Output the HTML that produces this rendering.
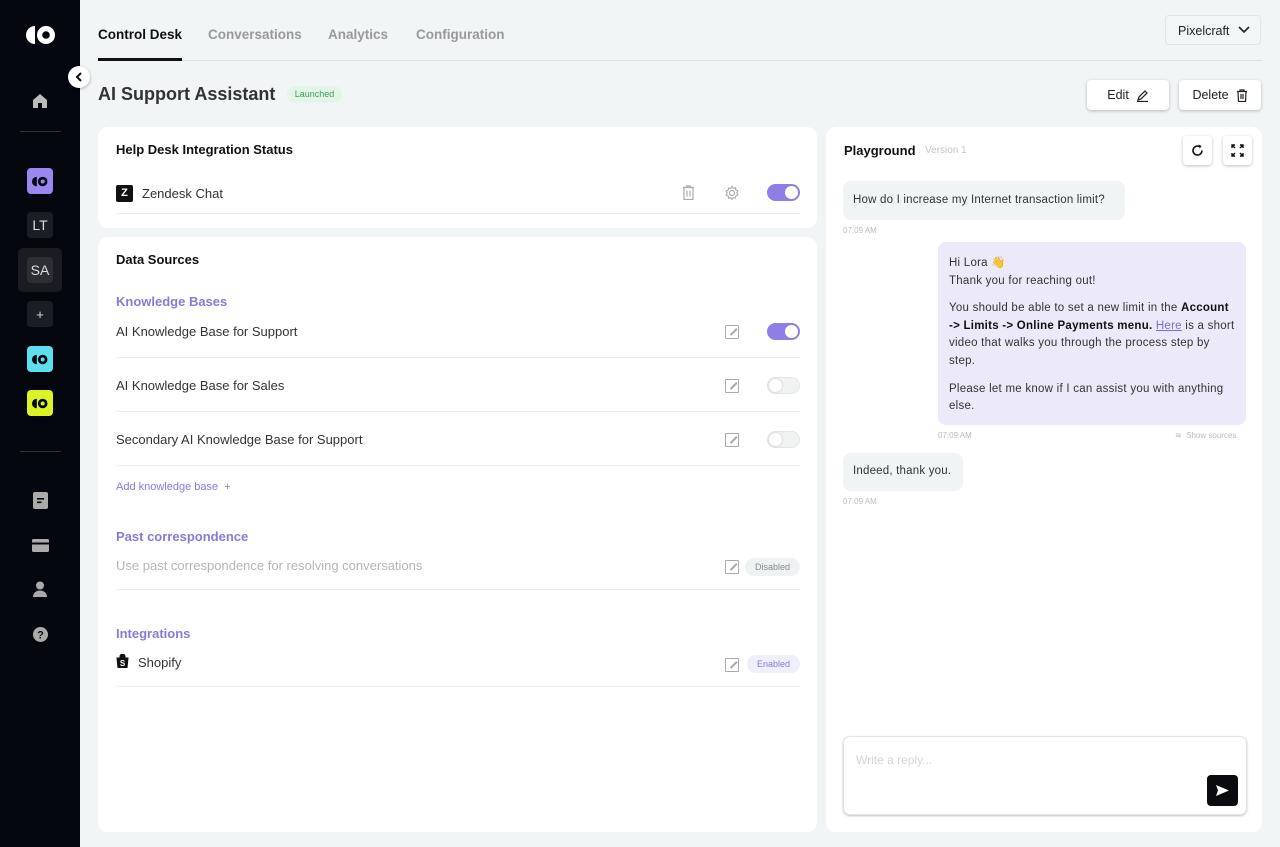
<!DOCTYPE html>
<html><head><meta charset="utf-8">
<style>
*{box-sizing:border-box;margin:0;padding:0}
body{width:1280px;height:847px;overflow:hidden;background:#f1f5f5;font-family:"Liberation Sans",sans-serif;color:#222;position:relative}
.a{position:absolute}
.side{left:0;top:0;width:80px;height:847px;background:#05070f}
.sq{position:absolute;left:27px;width:26px;height:26px;border-radius:4px;display:flex;align-items:center;justify-content:center;font-size:14px;color:#ddd}
.card{background:#fff;border-radius:10px;position:absolute}
.t{position:absolute;white-space:nowrap}
.line{position:absolute;height:1px;background:#ececec}
.tog{position:absolute;width:33px;height:17px;border-radius:9px}
.tog.on{background:#8f7ee8}
.tog.on::after{content:"";position:absolute;right:2px;top:2px;width:13px;height:13px;border-radius:50%;background:#fff}
.tog.off{background:#f1f3f3;border:1px solid #e3e6e6}
.tog.off::after{content:"";position:absolute;left:1px;top:1px;width:13px;height:13px;border-radius:50%;background:#fff;box-shadow:0 0 2px #bbb}
.btn{position:absolute;background:#fff;border-radius:4px;box-shadow:0 1px 3px rgba(0,0,0,.25);display:flex;align-items:center;justify-content:center;font-size:13px;color:#222}
.pl{color:#8b78dc;font-weight:bold;font-size:13px}
.ed{position:absolute;width:14px;height:14px;border:1.5px solid #aaa;border-radius:1px}
.ed::after{content:"";position:absolute;left:3px;top:5px;width:9px;height:1.5px;background:#aaa;transform:rotate(-45deg)}
</style></head><body>
<div class="a side">
 <svg class="a" style="left:26px;top:25px" width="30" height="20" viewBox="0 0 30 20"><path d="M9 1A9 9 0 0 0 9 19Z" fill="#fff"/><circle cx="20" cy="10" r="9" fill="#fff"/><circle cx="20" cy="10" r="3.8" fill="#05070f"/></svg>
 <svg class="a" style="left:32px;top:93px" width="16" height="16" viewBox="0 0 16 16"><path d="M1 7L8 1l7 6v8h-5v-5H6v5H1z" fill="#bbb"/></svg>
 <div class="a" style="left:20px;top:131px;width:41px;height:1px;background:#333"></div>
 <div class="sq" style="top:168px;background:#9b87f0"><svg width="16" height="11" viewBox="0 0 30 20"><path d="M9 1A9 9 0 0 0 9 19Z" fill="#05070f"/><circle cx="20" cy="10" r="9" fill="#05070f"/><circle cx="20" cy="10" r="3.8" fill="#9b87f0"/></svg></div>
 <div class="sq" style="top:212px;background:#1c1e25">LT</div>
 <div class="a" style="left:18px;top:248px;width:44px;height:44px;border-radius:5px;background:#1a1c22"></div>
 <div class="sq" style="top:257px;background:#2c2e35">SA</div>
 <div class="sq" style="top:301px;background:#1c1e25;font-size:13px">+</div>
 <div class="sq" style="top:346px;background:#5ce0f0"><svg width="16" height="11" viewBox="0 0 30 20"><path d="M9 1A9 9 0 0 0 9 19Z" fill="#05070f"/><circle cx="20" cy="10" r="9" fill="#05070f"/><circle cx="20" cy="10" r="3.8" fill="#5ce0f0"/></svg></div>
 <div class="sq" style="top:390px;background:#dcf522"><svg width="16" height="11" viewBox="0 0 30 20"><path d="M9 1A9 9 0 0 0 9 19Z" fill="#05070f"/><circle cx="20" cy="10" r="9" fill="#05070f"/><circle cx="20" cy="10" r="3.8" fill="#dcf522"/></svg></div>
 <div class="a" style="left:20px;top:451px;width:41px;height:1px;background:#333"></div>
 <svg class="a" style="left:33px;top:492px" width="15" height="17" viewBox="0 0 15 17"><rect width="15" height="17" rx="2" fill="#aaa"/><rect x="4" y="6" width="7" height="1.6" fill="#05070f"/><rect x="4" y="9.5" width="4.5" height="1.6" fill="#05070f"/></svg>
 <svg class="a" style="left:32px;top:539px" width="17" height="13" viewBox="0 0 17 13"><rect width="17" height="13" rx="1.5" fill="#aaa"/><rect y="3.5" width="17" height="2" fill="#05070f"/></svg>
 <svg class="a" style="left:32px;top:581px" width="16" height="16" viewBox="0 0 16 16"><circle cx="8" cy="4.5" r="4" fill="#aaa"/><path d="M1 16c0-4 3-6.5 7-6.5s7 2.5 7 6.5z" fill="#aaa"/></svg>
 <svg class="a" style="left:33px;top:627px" width="15" height="15" viewBox="0 0 15 15"><circle cx="7.5" cy="7.5" r="7.5" fill="#aaa"/><text x="7.5" y="11.5" font-size="11" font-weight="bold" text-anchor="middle" fill="#05070f" font-family="Liberation Sans">?</text></svg>
</div>
<div class="a" style="left:68px;top:66px;width:22px;height:22px;border-radius:50%;background:#fff;box-shadow:0 1px 3px rgba(0,0,0,.3);display:flex;align-items:center;justify-content:center"><svg width="8" height="10" viewBox="0 0 8 10"><path d="M6 1L2 5l4 4" stroke="#111" stroke-width="2" fill="none"/></svg></div>

<div class="t" style="left:98px;top:27px;font-size:13.5px;font-weight:bold;color:#111">Control Desk</div>
<div class="t" style="left:208px;top:27px;font-size:13.5px;font-weight:bold;color:#999">Conversations</div>
<div class="t" style="left:328px;top:27px;font-size:13.5px;font-weight:bold;color:#999">Analytics</div>
<div class="t" style="left:416px;top:27px;font-size:13.5px;font-weight:bold;color:#999">Configuration</div>
<div class="a" style="left:98px;top:60px;width:1164px;height:1px;background:#dde2e2"></div>
<div class="a" style="left:98px;top:58px;width:84px;height:3px;background:#111"></div>
<div class="a" style="left:1165px;top:15px;width:96px;height:30px;border:1px solid #e2e6e6;border-radius:4px;background:#f3f6f6;font-size:12.5px;color:#222;padding:8px 0 0 12px">Pixelcraft <svg style="position:absolute;left:72px;top:10px" width="12" height="8" viewBox="0 0 12 8"><path d="M1 1l5 5 5-5" stroke="#222" stroke-width="1.6" fill="none"/></svg></div>

<div class="t" style="left:98px;top:84px;font-size:18px;font-weight:bold;color:#333">AI Support Assistant</div>
<div class="a" style="left:287px;top:86px;width:55px;height:17px;border-radius:9px;background:#e3f5e6;color:#3a9f55;font-size:9px;text-align:center;line-height:17px">Launched</div>
<div class="btn" style="left:1087px;top:80px;width:82px;height:30px;font-size:12.5px">Edit&nbsp;&nbsp;<svg width="13" height="13" viewBox="0 0 13 13"><path d="M2 11l1-3 6-6 2 2-6 6z M1 12.5h11" stroke="#222" stroke-width="1.2" fill="none"/></svg></div>
<div class="btn" style="left:1179px;top:80px;width:82px;height:30px;font-size:12.5px">Delete&nbsp;&nbsp;<svg width="12" height="13" viewBox="0 0 12 13"><path d="M1 2.5h10M4 2.5V1h4v1.5M2 2.5l.5 10h7l.5-10M5 5v5M7 5v5" stroke="#222" stroke-width="1.2" fill="none"/></svg></div>

<div class="card" style="left:98px;top:127px;width:719px;height:101px">
 <div class="t" style="left:18px;top:15px;font-size:13px;font-weight:bold;color:#111">Help Desk Integration Status</div>
 <div class="a" style="left:18px;top:58px;width:17px;height:17px;background:#111;border-radius:2px;color:#fff;font-size:11px;font-weight:bold;text-align:center;line-height:17px">Z</div>
 <div class="t" style="left:44px;top:59px;font-size:13px;color:#333">Zendesk Chat</div>
 <svg class="a" style="left:584px;top:58px" width="13" height="15" viewBox="0 0 13 15"><path d="M1 2.5h11M4.5 2.5V1h4v1.5M2 2.5v12h9v-12M5 5.5v6M8 5.5v6" stroke="#aaa" stroke-width="1.2" fill="none"/></svg>
 <svg class="a" style="left:626px;top:58px" width="16" height="16" viewBox="0 0 16 16"><circle cx="8" cy="8" r="2.5" stroke="#aaa" stroke-width="1.2" fill="none"/><path d="M8 1.5l1.3 1.8 2.2-.6.3 2.2 2 1-1 2 1 2-2 1-.3 2.2-2.2-.6L8 14.5l-1.3-1.8-2.2.6-.3-2.2-2-1 1-2-1-2 2-1 .3-2.2 2.2.6z" stroke="#aaa" stroke-width="1.1" fill="none"/></svg>
 <div class="tog on" style="left:669px;top:57px"></div>
 <div class="line" style="left:18px;top:86px;width:684px"></div>
</div>

<div class="card" style="left:98px;top:237px;width:719px;height:595px">
 <div class="t" style="left:18px;top:15px;font-size:13px;font-weight:bold;color:#111">Data Sources</div>
 <div class="t pl" style="left:18px;top:57px">Knowledge Bases</div>
 <div class="t" style="left:18px;top:87px;font-size:13px;color:#333">AI Knowledge Base for Support</div>
 <div class="ed" style="left:627px;top:88px"></div><div class="tog on" style="left:669px;top:86px"></div>
 <div class="line" style="left:18px;top:120px;width:684px"></div>
 <div class="t" style="left:18px;top:141px;font-size:13px;color:#333">AI Knowledge Base for Sales</div>
 <div class="ed" style="left:627px;top:142px"></div><div class="tog off" style="left:669px;top:140px"></div>
 <div class="line" style="left:18px;top:174px;width:684px"></div>
 <div class="t" style="left:18px;top:195px;font-size:13px;color:#333">Secondary AI Knowledge Base for Support</div>
 <div class="ed" style="left:627px;top:196px"></div><div class="tog off" style="left:669px;top:194px"></div>
 <div class="line" style="left:18px;top:228px;width:684px"></div>
 <div class="t" style="left:18px;top:244px;font-size:11px;color:#8b78dc">Add knowledge base&nbsp; +</div>
 <div class="t pl" style="left:18px;top:292px">Past correspondence</div>
 <div class="t" style="left:18px;top:321px;font-size:13px;color:#b5b5b5">Use past correspondence for resolving conversations</div>
 <div class="ed" style="left:627px;top:323px"></div>
 <div class="a" style="left:647px;top:321px;width:55px;height:18px;border-radius:9px;background:#eef2f2;color:#888;font-size:9px;text-align:center;line-height:18px">Disabled</div>
 <div class="line" style="left:18px;top:352px;width:684px"></div>
 <div class="t pl" style="left:18px;top:389px">Integrations</div>
 <svg class="a" style="left:18px;top:417px" width="13" height="14" viewBox="0 0 13 14"><path d="M1 4h11l-1 10H2z M4 4V2.5a2.5 2.5 0 0 1 5 0V4" fill="#111" stroke="#111" stroke-width="1"/><text x="6.5" y="12" font-size="8" fill="#fff" text-anchor="middle" font-family="Liberation Sans" font-weight="bold">S</text></svg>
 <div class="t" style="left:40px;top:418px;font-size:13px;color:#333">Shopify</div>
 <div class="ed" style="left:627px;top:421px"></div>
 <div class="a" style="left:649px;top:418px;width:53px;height:18px;border-radius:9px;background:#efeefb;color:#8b78dc;font-size:9px;text-align:center;line-height:18px">Enabled</div>
 <div class="line" style="left:18px;top:449px;width:684px"></div>
</div>

<div class="card" style="left:826px;top:127px;width:436px;height:705px">
 <div class="t" style="left:18px;top:16px;font-size:13px;font-weight:bold;color:#111">Playground</div>
 <div class="t" style="left:99px;top:18px;font-size:10px;color:#c5c5c5">Version 1</div>
 <div class="btn" style="left:357px;top:9px;width:29px;height:29px"><svg width="13" height="13" viewBox="0 0 13 13"><path d="M11 6.5A4.5 4.5 0 1 1 8.5 2.5" stroke="#111" stroke-width="1.6" fill="none"/><path d="M7.5 0.5l3 1.5-1.8 2.6z" fill="#111"/></svg></div>
 <div class="btn" style="left:397px;top:9px;width:29px;height:29px"><svg width="13" height="13" viewBox="0 0 13 13"><path d="M1 4V1h3M9 1h3v3M12 9v3H9M4 12H1V9M1 1l3 3M12 1L9 4M12 12L9 9M1 12l3-3" stroke="#111" stroke-width="1.4" fill="none"/></svg></div>
 <div class="a" style="left:17px;top:54px;width:282px;height:39px;background:#f0f4f4;border-radius:8px;font-size:11.5px;color:#333;padding:13px 10px;letter-spacing:0.2px">How do I increase my Internet transaction limit?</div>
 <div class="t" style="left:17px;top:99px;font-size:8px;color:#bbb">07:09 AM</div>
 <div class="a" style="left:112px;top:115px;width:308px;height:183px;background:#ece9fb;border-radius:8px;font-size:11.5px;color:#333;padding:13px 11px;line-height:17.6px;letter-spacing:0.25px">Hi Lora 👋<br>Thank you for reaching out!<div style="height:10px"></div>You should be able to set a new limit in the <b style="color:#111">Account -&gt; Limits -&gt; Online Payments menu.</b> <span style="color:#7b6be0;text-decoration:underline">Here</span> is a short video that walks you through the process step by step.<div style="height:10px"></div>Please let me know if I can assist you with anything else.</div>
 <div class="t" style="left:112px;top:304px;font-size:8px;color:#bbb">07:09 AM</div>
 <div class="t" style="left:349px;top:304px;font-size:8px;color:#bbb">≋&nbsp; Show sources</div>
 <div class="a" style="left:17px;top:326px;width:120px;height:38px;background:#f0f4f4;border-radius:8px;font-size:11.5px;color:#333;padding:12px 10px;letter-spacing:0.2px">Indeed, thank you.</div>
 <div class="t" style="left:17px;top:370px;font-size:8px;color:#bbb">07:09 AM</div>
 <div class="a" style="left:17px;top:609px;width:404px;height:79px;border:1px solid #e4e4e4;border-radius:7px;box-shadow:0 1px 2px rgba(0,0,0,.25);background:#fff">
  <div class="t" style="left:12px;top:16px;font-size:12px;color:#d5d5d5">Write a reply...</div>
  <div class="a" style="left:363px;top:38px;width:31px;height:31px;background:#0a0a0f;border-radius:4px"><svg style="position:absolute;left:8px;top:9px" width="15" height="13" viewBox="0 0 15 13"><path d="M1 1l13 5.5L1 12l2-5.5z" fill="#fff"/></svg></div>
 </div>
</div>
</body></html>
